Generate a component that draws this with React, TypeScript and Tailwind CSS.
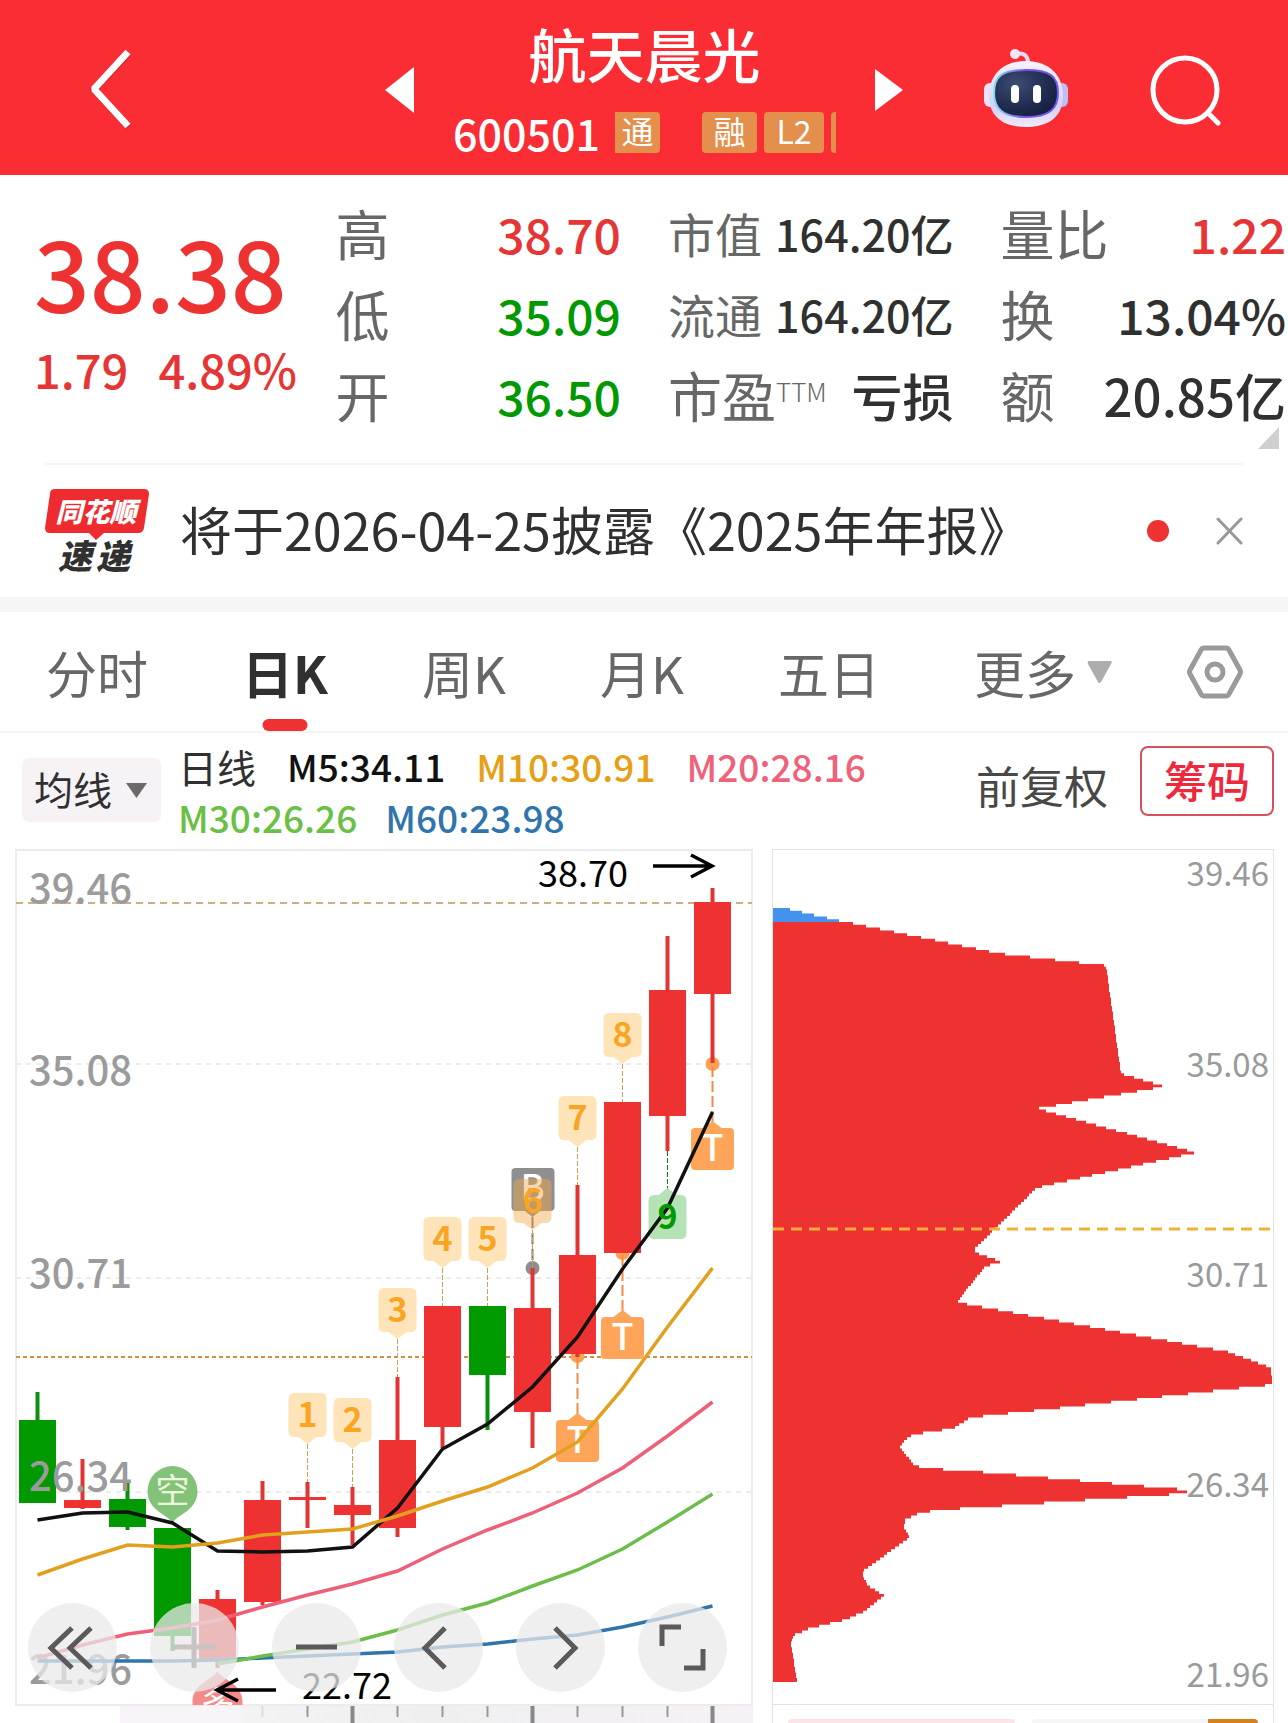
import React from "react";

const RED = "#ee3131";
const GREEN = "#009900";

function Header() {
  return (
    <header className="flex h-[175px] items-center bg-[#f92d33] pr-[66px] pl-[86px] text-white">
      <button type="button" aria-label="返回" className="mr-auto">
        <svg width="50" height="84" viewBox="0 0 50 84" fill="none" className="block">
          <path d="M43 7 8 44l35 37" stroke="#a81c22" strokeOpacity=".4" strokeWidth="7" />
          <path d="M42 6 8 43l34 37" stroke="#fff" strokeWidth="7" strokeLinejoin="bevel" />
        </svg>
      </button>
      <div className="flex items-center gap-[39px] pt-[5px]">
        <button type="button" aria-label="上一只">
          <svg width="29" height="46" viewBox="0 0 29 46" className="block"><path d="M29 0v46L0 23z" fill="#fff" /></svg>
        </button>
        <div className="flex w-[383px] flex-col items-center gap-[24px]">
          <h1 className="text-[58px] leading-[60px] font-medium whitespace-nowrap">航天晨光</h1>
          <div className="flex h-[51px] w-full items-center [overflow-x:clip]">
            <span className="w-[162px] shrink-0 text-[43px] leading-[50px] font-medium">600501</span>
            <span className="mr-[42px] h-[41px] w-[45px] shrink-0 rounded-r-[4px] bg-[#e48f4c] text-center text-[32px] leading-[36px]">通</span>
            <span className="mr-[7px] h-[41px] w-[55px] shrink-0 rounded-[4px] bg-[#e48f4c] text-center text-[32px] leading-[36px]">融</span>
            <span className="mr-[7px] h-[41px] w-[60px] shrink-0 rounded-[4px] bg-[#e48f4c] text-center text-[32px] leading-[36px]">L2</span>
            <span className="h-[41px] w-[40px] shrink-0 rounded-[4px] bg-[#e48f4c]" />
          </div>
        </div>
        <button type="button" aria-label="下一只">
          <svg width="28" height="42" viewBox="0 0 28 42" className="block"><path d="M0 0v42l28-21z" fill="#fff" /></svg>
        </button>
      </div>
      <button type="button" aria-label="智能助手" className="ml-[80px]">
        <svg width="86" height="80" viewBox="0 0 86 80" className="block">
          <defs>
            <linearGradient id="shell" x1="0" y1="0" x2="0" y2="1">
              <stop offset="0" stopColor="#f6f2fc" />
              <stop offset=".7" stopColor="#d5d0f6" />
              <stop offset="1" stopColor="#efedf8" />
            </linearGradient>
            <linearGradient id="rim" x1="0" y1="0" x2="1" y2="0">
              <stop offset="0" stopColor="#7fe0f0" />
              <stop offset=".5" stopColor="#7a4bea" />
              <stop offset="1" stopColor="#6a5cf0" />
            </linearGradient>
            <radialGradient id="visor" cx=".35" cy=".3" r=".8">
              <stop offset="0" stopColor="#3d4d73" />
              <stop offset=".6" stopColor="#212c50" />
              <stop offset="1" stopColor="#141c3c" />
            </radialGradient>
          </defs>
          <path d="M33 6c8-2 12 2 12 9" fill="none" stroke="#e3daf5" strokeWidth="4" />
          <circle cx="32" cy="6" r="5" fill="#eee6fa" />
          <rect x="1" y="35" width="14" height="24" rx="6" fill="#e9e4fa" />
          <rect x="71" y="35" width="14" height="24" rx="6" fill="#bfbdf2" />
          <path d="M43 13c23 0 37 14 37 35S65 79 43 79 6 69 6 48s14-35 37-35z" fill="url(#shell)" />
          <path d="M43 22c24 0 32 6 32 23 0 16-9 24-32 24s-32-8-32-24c0-17 8-23 32-23z" fill="url(#visor)" stroke="url(#rim)" strokeWidth="2" />
          <rect x="28" y="37" width="8" height="18" rx="4" fill="#fff" />
          <rect x="50" y="37" width="8" height="18" rx="4" fill="#fff" />
        </svg>
      </button>
      <button type="button" aria-label="搜索" className="ml-[81px]">
        <svg width="72" height="76" viewBox="0 0 72 76" fill="none" stroke="#fff" strokeWidth="5" strokeLinecap="round" className="block">
          <circle cx="35" cy="40" r="32" />
          <path d="M58 63l10 10" />
        </svg>
      </button>
    </header>
  );
}

type Row = { label: React.ReactNode; value: string; tone?: string; small?: boolean; wide?: boolean };

const quoteColumns: Row[][] = [
  [
    { label: "高", value: "38.70", tone: "text-[#e63535]" },
    { label: "低", value: "35.09", tone: "text-[#009900]" },
    { label: "开", value: "36.50", tone: "text-[#009900]" },
  ],
  [
    { label: "市值", value: "164.20亿", small: true },
    { label: "流通", value: "164.20亿", small: true },
    {
      label: (
        <>
          市盈<sup className="top-0 align-[16px] text-[26px] leading-none font-light">TTM</sup>
        </>
      ),
      value: "亏损",
      wide: true,
    },
  ],
  [
    { label: "量比", value: "1.22", tone: "text-[#e63535]" },
    { label: "换", value: "13.04%" },
    { label: "额", value: "20.85亿", wide: true },
  ],
];

function valueSize(r: Row) {
  if (r.small) return "text-[43px]";
  return r.wide ? "text-[51px]" : "text-[48px]";
}

function Quote() {
  return (
    <section className="relative grid grid-cols-[254fr_285fr_285fr_285fr] gap-[47px] pt-[17px] pr-[2px] pb-[28px] pl-[34px]">
      <div className="min-w-0 pt-[18px] whitespace-nowrap text-[#ee3131]">
        <p className="text-[98px] leading-[120px] font-medium">38.38</p>
        <p className="flex gap-[30px] text-[47px] leading-[78px] font-medium text-[#e63535]">
          <span>1.79</span>
          <span>4.89%</span>
        </p>
      </div>
      {quoteColumns.map((rows, i) => (
        <dl key={i} className="min-w-0">
          {rows.map((r, j) => (
            <div key={j} className="flex h-[81px] items-center justify-between whitespace-nowrap">
              <dt className={r.small ? "text-[47px] leading-[60px] text-[#666866]" : "text-[54px] leading-[60px] text-[#666866]"}>{r.label}</dt>
              <dd className={`leading-[60px] font-medium ${valueSize(r)} ${r.tone ?? "text-[#303030]"}`}>{r.value}</dd>
            </div>
          ))}
        </dl>
      ))}
      <svg width="21" height="22" viewBox="0 0 21 22" className="absolute right-[9px] bottom-[14px]">
        <path d="M21 0v22H0z" fill="#cfcfcf" />
      </svg>
    </section>
  );
}

function News() {
  return (
    <section className="mx-[45px] flex h-[134px] items-center border-t-2 border-[#f4f4f4]">
      <svg width="104" height="84" viewBox="0 0 104 84" className="block shrink-0" role="img" aria-label="同花顺速递">
        <path d="M10 0h89q5 0 5 5l-5 34q-1 5-6 5H59l-8 7-7-7H5q-5 0-5-5L5 5q0-5 5-5z" fill="#ee2b2f" />
        <text x="51" y="33" textAnchor="middle" fontSize="27" fontWeight="900" fontStyle="italic" fill="#fff">同花顺</text>
        <text x="13" y="80" fontSize="34" fontWeight="900" fontStyle="italic" fill="#303030">速</text>
        <text x="51" y="80" fontSize="34" fontWeight="900" fontStyle="italic" fill="#303030">递</text>
      </svg>
      <a href="#report" className="ml-[31px] pb-[4px] text-[52px] leading-[60px] whitespace-nowrap text-[#303030]">将于2026-04-25披露《2025年年报》</a>
      <span className="ml-auto size-[22px] shrink-0 rounded-full bg-[#ee3131]" />
      <button type="button" aria-label="关闭" className="ml-[47px] shrink-0">
        <svg width="27" height="28" viewBox="0 0 27 28" stroke="#999" strokeWidth="3" strokeLinecap="round" className="block">
          <path d="M2 2l23 24M25 2 2 26" />
        </svg>
      </button>
    </section>
  );
}

function Tabs() {
  return (
    <nav className="flex h-[136px] items-center gap-[75px] border-t-[15px] border-b-2 border-t-[#f6f6f6] border-b-[#f4f4f4] pr-[45px] pl-[46px] text-[51px] leading-[106px] whitespace-nowrap text-[#666866]">
      <div className="flex flex-1 justify-between">
        <button type="button">分时</button>
        <button type="button" aria-current="page" className="relative font-bold text-[#303030]">
          日K
          <span className="absolute -bottom-[6px] left-1/2 h-[12px] w-[45px] -translate-x-1/2 rounded-full bg-[#ee3131]" />
        </button>
        <button type="button">周K</button>
        <button type="button">月K</button>
        <button type="button">五日</button>
        <button type="button" aria-haspopup="menu" className="flex items-center gap-[11px]">
          更多
          <svg width="25" height="22" viewBox="0 0 25 22"><path d="M2 0h21q3 0 1 3L14 21q-2 2-3 0L1 3Q0 0 2 0z" fill="#adadad" /></svg>
        </button>
      </div>
      <button type="button" aria-label="设置">
        <svg width="56" height="54" viewBox="0 0 56 54" fill="none" stroke="#9a9a9a" strokeWidth="5" strokeLinejoin="round" className="block">
          <path d="M17 3h22q2 0 3 2l11 20q1 2 0 4L42 49q-1 2-3 2H17q-2 0-3-2L3 29q-1-2 0-4L14 5q1-2 3-2z" />
          <circle cx="28" cy="27" r="8" />
        </svg>
      </button>
    </nav>
  );
}

function Averages() {
  return (
    <section className="flex h-[116px] items-start pr-[14px] pl-[22px] whitespace-nowrap">
      <div className="relative mt-[25px] h-[64px] w-[139px] shrink-0 rounded-[7px] bg-[#f6f2f6]">
        <select aria-label="主图指标" className="size-full appearance-none bg-transparent pb-[4px] pl-[12px] text-[39px] leading-[60px] text-[#303030]">
          <option>均线</option>
        </select>
        <svg width="21" height="15" viewBox="0 0 21 15" className="pointer-events-none absolute top-[25px] right-[14px]"><path d="M0 0h21L10.5 15z" fill="#6b6b6b" /></svg>
      </div>
      <div className="mt-[8px] ml-[17px] text-[37px] leading-[51px] font-medium">
        <div className="flex gap-[31px]">
          <span className="text-[39px] font-normal text-[#303030]">日线</span>
          <span className="text-[#111]">M5:34.11</span>
          <span className="text-[#e6a018]">M10:30.91</span>
          <span className="text-[#f0627a]">M20:28.16</span>
        </div>
        <div className="flex gap-[28px]">
          <span className="text-[#6abf45]">M30:26.26</span>
          <span className="text-[#2f75ab]">M60:23.98</span>
        </div>
      </div>
      <button type="button" className="mt-[22px] ml-auto text-[44px] leading-[60px] text-[#484848]">前复权</button>
      <button type="button" className="mt-[13px] ml-[32px] h-[70px] w-[134px] rounded-[8px] border-2 border-[#d4505c] pb-[4px] text-[43px] leading-[60px] font-medium text-[#f0283c]">筹码</button>
    </section>
  );
}

/* wick top, body top, body bottom, wick bottom, rising */
const candles: [number, number, number, number, boolean][] = [
  [1392, 1420, 1503, 1503, false],
  [1459, 1500, 1508, 1509, true],
  [1482, 1499, 1527, 1530, false],
  [1528, 1528, 1636, 1651, false],
  [1590, 1599, 1661, 1668, true],
  [1481, 1500, 1602, 1605, true],
  [1482, 1497, 1500, 1528, true],
  [1487, 1505, 1515, 1545, true],
  [1377, 1440, 1528, 1537, true],
  [1306, 1306, 1427, 1448, true],
  [1306, 1306, 1375, 1430, false],
  [1268, 1308, 1412, 1448, true],
  [1185, 1255, 1354, 1357, true],
  [1102, 1102, 1253, 1253, true],
  [936, 990, 1116, 1151, true],
  [888, 902, 994, 1063, true],
];

const averages: { color: string; from: number; ys: number[] }[] = [
  { color: "#2f75ab", from: 0, ys: [1661, 1661, 1661, 1661, 1660, 1658, 1656, 1654, 1652, 1647, 1644, 1639, 1635, 1627, 1617, 1606] },
  { color: "#6cbd49", from: 4, ys: [1664, 1656, 1649, 1642, 1630, 1615, 1603, 1586, 1570, 1549, 1522, 1494] },
  { color: "#ee6078", from: 0, ys: [1658, 1645, 1634, 1628, 1620, 1607, 1595, 1584, 1571, 1549, 1530, 1513, 1493, 1468, 1436, 1402] },
  { color: "#111", from: 0, ys: [1520, 1513, 1512, 1523, 1551, 1552, 1551, 1547, 1508, 1449, 1424, 1387, 1337, 1269, 1208, 1112] },
  { color: "#e2a01e", from: 0, ys: [1575, 1559, 1545, 1547, 1543, 1535, 1532, 1529, 1516, 1501, 1487, 1468, 1442, 1389, 1327, 1268] },
];

/* candle index, top of the flag */
const counts: { n: number; i: number; top: number; to: number }[] = [
  { n: 1, i: 6, top: 1393, to: 1482 },
  { n: 2, i: 7, top: 1398, to: 1487 },
  { n: 3, i: 8, top: 1288, to: 1377 },
  { n: 4, i: 9, top: 1217, to: 1306 },
  { n: 5, i: 10, top: 1217, to: 1306 },
  { n: 6, i: 11, top: 1179, to: 1268 },
  { n: 7, i: 12, top: 1096, to: 1185 },
  { n: 8, i: 13, top: 1013, to: 1102 },
];

const trades = [
  { i: 12, top: 1420, dot: 1356 },
  { i: 13, top: 1317, dot: 1253 },
  { i: 15, top: 1128, dot: 1064 },
];

const cx = (i: number) => 37.5 + i * 45;

function CandleChart() {
  return (
    <svg viewBox="15 849 739 874" className="block w-full" role="img" aria-label="日K线图">
      <defs>
        <clipPath id="plot"><rect x="15" y="849" width="739" height="856" /></clipPath>
        <linearGradient id="axis" x1="0" y1="0" x2="1" y2="0">
          <stop offset="0" stopColor="#f8f4f9" />
          <stop offset=".18" stopColor="#f8f5f9" />
          <stop offset=".2" stopColor="#f3f3f3" />
          <stop offset=".5" stopColor="#efeff0" />
          <stop offset="1" stopColor="#f6f1f6" />
        </linearGradient>
      </defs>
      <rect x="120" y="1706" width="633" height="17" fill="url(#axis)" />
      <rect x="16" y="850" width="736" height="855" fill="#fff" stroke="#ececec" strokeWidth="2" />
      {[1064, 1278, 1492].map((y) => (
        <path key={y} d={`M16 ${y}H752`} stroke="#ececec" strokeWidth="2" strokeDasharray="5 5" />
      ))}
      <path d="M16 903H752" stroke="#cdb080" strokeWidth="2" strokeDasharray="7 5" />
      <path d="M16 1357H752" stroke="#d98d3c" strokeWidth="2" strokeDasharray="4 3" />
      {[5, 6, 8, 9, 10, 12, 13, 14].map((i) => (
        <path key={i} d={`M${cx(i)} 1706v11`} stroke={i === 5 ? "#ddd" : "#999"} strokeWidth="2" />
      ))}
      {[7, 11, 15].map((i) => (
        <path key={i} d={`M${cx(i)} 1706v17`} stroke="#888" strokeWidth="4" />
      ))}

      {trades.map((t) => <circle key={t.i} cx={cx(t.i)} cy={t.dot} r="7" fill="#fda053" />)}
      <circle cx={cx(11)} cy="1268" r="7" fill="#8e8e8e" />

      {candles.map(([wt, bt, bb, wb, up], i) => (
        <g key={i} fill={up ? RED : GREEN}>
          <rect x={cx(i) - 2} y={wt} width="4" height={wb - wt} fill={up ? "#e03535" : "#0a8f0f"} />
          <rect x={cx(i) - 18.5} y={bt} width="37" height={bb - bt} />
        </g>
      ))}

      <g fontSize="40" fontWeight="500" fill="#9b9b9d">
        <text x="29" y="903">39.46</text>
        <text x="29" y="1085">35.08</text>
        <text x="29" y="1288">30.71</text>
        <text x="29" y="1491">26.34</text>
        <text x="29" y="1684">21.96</text>
      </g>

      <g clipPath="url(#plot)">
        <path d="M172.5 1524c-3-10-25-12-25-33a25 25 0 0 1 50 0c0 21-22 23-25 33z" fill="#76bd6a" fillOpacity=".9" />
        <text x="172.5" y="1503" textAnchor="middle" fontSize="34" fill="#eef8dc">空</text>
        <path d="M217.5 1671c3 8 25 12 25 31a25 25 0 0 1-50 0c0-19 22-23 25-31z" fill="#f58a8a" />
        <text x="217.5" y="1716" textAnchor="middle" fontSize="34" fill="#fff">多</text>
      </g>

      {trades.map((t) => (
        <g key={t.i}>
          <path d={`M${cx(t.i)} ${t.dot + 2}V${t.top - 6}`} stroke="#f08d44" strokeWidth="2" strokeDasharray="11 4" />
          <path d={`M${cx(t.i)} ${t.top - 7}l-9 7h18z`} fill="#fea55a" />
          <rect x={cx(t.i) - 21.5} y={t.top} width="43" height="42" rx="4" fill="#fea55a" />
          <text x={cx(t.i)} y={t.top + 33} textAnchor="middle" fontSize="36" fontWeight="500" fill="#fff">T</text>
        </g>
      ))}
      <path d={`M${cx(11)} 1217v50`} stroke="#777" strokeWidth="2" strokeDasharray="11 5" />
      <path d={`M${cx(11)} 1217l-9-7h18z`} fill="#8e8e8e" />
      <rect x={cx(11) - 21} y="1168" width="43" height="43" rx="4" fill="#8f8f8f" />
      <text x={cx(11)} y="1201" textAnchor="middle" fontSize="36" fontWeight="500" fill="#fff">B</text>

      {counts.map(({ n, i, top, to }) => (
        <g key={n}>
          <path d={`M${cx(i)} ${top + 51}V${to}`} stroke="#d0a050" strokeWidth="1" strokeDasharray="5 2" />
          <path
            d={`M${cx(i) - 13} ${top}h26q6 0 6 6v32q0 6-6 6h-4l-9 7-9-7h-4q-6 0-6-6v-32q0-6 6-6z`}
            fill={n === 6 ? "#f3a94a" : "#fee4b8"}
            fillOpacity={n === 6 ? 0.45 : 1}
          />
          <text x={cx(i)} y={top + 34} textAnchor="middle" fontSize="34" fontWeight="700" fill="#faa423">{n}</text>
        </g>
      ))}
      <path d={`M${cx(14)} 1151v38`} stroke="#0a7f12" strokeWidth="1" strokeDasharray="5 2" />
      <path d={`M${cx(14) - 13} 1195h4l9-7 9 7h4q6 0 6 6v32q0 6-6 6h-26q-6 0-6-6v-32q0-6 6-6z`} fill="#b5e3b5" />

      <g fill="none" strokeWidth="3.5">
        {averages.map((a) => (
          <polyline key={a.color} stroke={a.color} points={a.ys.map((y, k) => `${cx(a.from + k)},${y}`).join(" ")} />
        ))}
      </g>
      <text x={cx(14)} y="1229" textAnchor="middle" fontSize="34" fontWeight="700" fill="#009900">9</text>

      <g fontSize="36" fill="#000">
        <text x="538" y="887">38.70</text>
        <text x="302" y="1699">22.72</text>
      </g>
      <path d="M653 866h58M691 855l21 11-21 11" fill="none" stroke="#000" strokeWidth="3.5" />
      <path d="M276 1690h-58M238 1679l-21 11 21 11" fill="none" stroke="#000" strokeWidth="3.5" />
    </svg>
  );
}

const controls: { label: string; d: string; faint?: boolean }[] = [
  { label: "快退", d: "M44 25 23 45l21 20M63 25 42 45l21 20" },
  { label: "放大", d: "M44 24v41M24 44h41", faint: true },
  { label: "缩小", d: "M24 44h41" },
  { label: "左移", d: "M51 25 31 45l20 20" },
  { label: "右移", d: "M39 25l20 20-20 20" },
  { label: "全屏", d: "M43 24H24v19M46 65h19V46" },
];

function ChartControls() {
  return (
    <div className="absolute bottom-[31px] left-[13px] flex gap-[33px]">
      {controls.map((c) => (
        <button key={c.label} type="button" aria-label={c.label} className="size-[89px] rounded-full bg-[#e9e9e9]/75">
          <svg width="89" height="89" viewBox="0 0 89 89" fill="none" stroke={c.faint ? "#c9c4c4" : "#5a5a5a"} strokeWidth="5" className="block">
            <path d={c.d} />
          </svg>
        </button>
      ))}
    </div>
  );
}

/* outline of the holding distribution: right edge x, price level y */
const profile: [number, number][] = [
  [773, 907], [839, 922], [1000, 955], [1106, 967], [1121, 1075], [1165, 1088], [1037, 1110],
  [1196, 1154], [1037, 1189], [975, 1250], [975, 1254], [1002, 1263], [985, 1268], [958, 1302],
  [958, 1304], [1227, 1353], [1271, 1369], [1272, 1386], [970, 1419], [953, 1430], [912, 1436],
  [905, 1442], [900, 1448], [914, 1467], [929, 1470], [965, 1472], [1195, 1492], [1169, 1496],
  [945, 1511], [920, 1514], [905, 1521], [904, 1529], [910, 1539], [863, 1572], [863, 1578],
  [868, 1587], [884, 1597], [864, 1613], [846, 1621], [809, 1630], [793, 1637], [791, 1645],
  [795, 1670], [797, 1682],
];

function edgeAt(y: number) {
  for (let k = 1; k < profile.length; k++) {
    const [x0, y0] = profile[k - 1];
    const [x1, y1] = profile[k];
    if (y <= y1) return x0 + ((x1 - x0) * (y - y0)) / (y1 - y0);
  }
  return profile[profile.length - 1][0];
}

function steps(from: number, to: number) {
  const step = 2.8;
  let d = `M773 ${from}`;
  for (let y = from; y < to; y += step) {
    d += `H${Math.round(edgeAt(y + step))}V${Math.min(y + step, to).toFixed(1)}`;
  }
  return `${d}H773z`;
}

function ChipPanel() {
  return (
    <div>
      <svg viewBox="772 849 502 855" className="block w-full" role="img" aria-label="筹码分布">
        <rect x="772.5" y="849.5" width="501" height="870" fill="#fff" stroke="#e2e2e2" />
        <path d={steps(922, 1682)} fill={RED} />
        <path d={steps(908, 922)} fill="#4292ee" />
        <path d="M773 1229h499" stroke="#f3b035" strokeWidth="3" strokeDasharray="11 7" />
        <g fontSize="33" fill="#999a9b" textAnchor="end">
          <text x="1269" y="886">39.46</text>
          <text x="1269" y="1077">35.08</text>
          <text x="1269" y="1287">30.71</text>
          <text x="1269" y="1497">26.34</text>
          <text x="1269" y="1687">21.96</text>
        </g>
      </svg>
      <div className="flex h-[19px] items-end gap-[17px] border border-b-0 border-[#e2e2e2] px-[15px]">
        <span className="h-[4px] flex-1 rounded-t-[6px] bg-[#fde3e7]" />
        <span className="flex h-[4px] flex-1 justify-end overflow-hidden rounded-t-[6px] bg-[#f5f5f5]">
          <span className="w-[50px] bg-[#d8801c]" />
        </span>
      </div>
    </div>
  );
}

export default function App() {
  return (
    <main className="overflow-x-hidden bg-white [font-family:'Noto_Sans_CJK_SC',sans-serif]">
      <Header />
      <Quote />
      <News />
      <Tabs />
      <Averages />
      <section className="grid grid-cols-[739fr_502fr] items-start gap-[18px] pr-[14px] pl-[15px]">
        <div className="relative">
          <CandleChart />
          <ChartControls />
        </div>
        <ChipPanel />
      </section>
    </main>
  );
}
